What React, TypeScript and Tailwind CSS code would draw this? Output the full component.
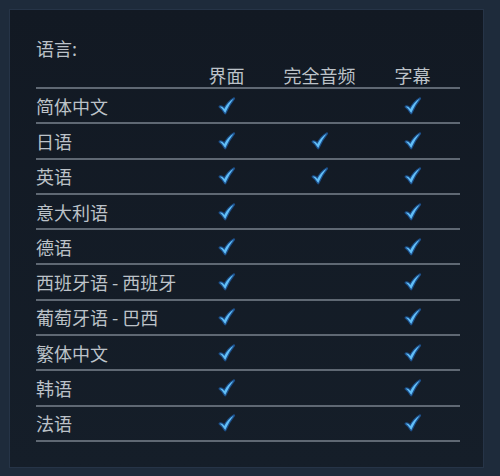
const rows: [string, boolean, boolean, boolean][] = [
  ['简体中文', true, false, true],
  ['日语', true, true, true],
  ['英语', true, true, true],
  ['意大利语', true, false, true],
  ['德语', true, false, true],
  ['西班牙语 - 西班牙', true, false, true],
  ['葡萄牙语 - 巴西', true, false, true],
  ['繁体中文', true, false, true],
  ['韩语', true, false, true],
  ['法语', true, false, true],
]

function Check() {
  const d = 'M2.5 9.6 C4.2 8.8 5.4 10 6.6 11.6 C8.8 7.6 11.4 4.4 15.2 2.2 C12.4 5.6 9.9 9.6 7.4 15.4 C6.2 13.2 4.6 11 2.5 9.6 Z'
  return (
    <svg width="20" height="20" viewBox="0 0 18 18" className="block">
      <path d={d} fill="#1c4f8a" stroke="#1c4f8a" strokeWidth="2.2" strokeLinejoin="round" />
      <path d={d} fill="#62bff7" />
    </svg>
  )
}

export default function App() {
  return (
    <div
      className="w-[500px] h-[476px] bg-[#1e2b3b] p-[10px] pr-[17px] pb-[9px] text-[#bcc2c8] text-[18px] leading-[26px]"
      style={{ fontFamily: '"Noto Sans CJK SC", "Noto Sans", sans-serif' }}
    >
      <div className="h-full bg-gradient-to-b from-[#121923] to-[#151e29] pl-[26px] pr-[23px] pt-[25px] shadow-[0_0_0_1px_#263447]">
        <div>语言:</div>
        <div className="grid grid-cols-[144px_93px_93px_93px] h-[27px] border-b-2 border-[#5f6873] mt-[1px]">
          <div />
          <div className="text-center">界面</div>
          <div className="text-center">完全音频</div>
          <div className="text-center">字幕</div>
        </div>
        {rows.map(([name, ui, audio, sub]) => (
          <div
            key={name}
            className="grid grid-cols-[144px_93px_93px_93px] h-[35.3px] items-center border-b-2 border-[#5f6873]"
          >
            <div className="whitespace-nowrap">{name}</div>
            <div className="flex justify-center">{ui && <Check />}</div>
            <div className="flex justify-center">{audio && <Check />}</div>
            <div className="flex justify-center">{sub && <Check />}</div>
          </div>
        ))}
      </div>
    </div>
  )
}
